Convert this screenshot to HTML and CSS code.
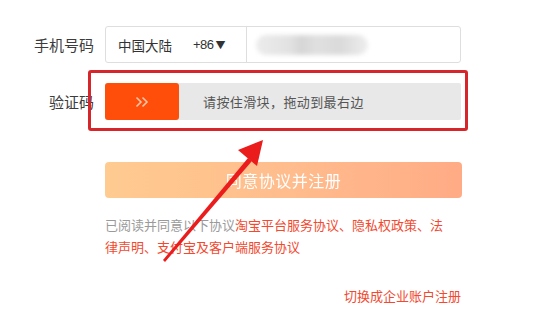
FILE: index.html
```html
<!DOCTYPE html>
<html lang="zh">
<head>
<meta charset="utf-8">
<link rel="stylesheet" href="styles.css">
</head>
<body>
<div class="page">
  <div class="row">
    <div class="label">手机号码</div>
    <div class="field phone">
      <div class="region">中国大陆<span class="code">+86</span><span class="caret">▼</span></div>
      <div class="number"><div class="blur"></div></div>
    </div>
  </div>
  <div class="row captcha-row">
    <div class="label">验证码</div>
    <div class="field slider">
      <div class="handle">
        <svg width="14" height="12" viewBox="0 0 14 12"><path d="M1.5 1.5 L6 6 L1.5 10.5 M7.5 1.5 L12 6 L7.5 10.5" fill="none" stroke="#ffc4a8" stroke-width="1.6"/></svg>
      </div>
      <div class="hint">请按住滑块，拖动到最右边</div>
    </div>
  </div>
  <div class="row btn-row">
    <div class="label"></div>
    <div class="submit">同意协议并注册</div>
  </div>
  <div class="row agree-row">
    <div class="label"></div>
    <p class="agree">已阅读并同意以下协议<span class="link">淘宝平台服务协议、隐私权政策、法律声明、支付宝及客户端服务协议</span></p>
  </div>
  <div class="switch"><span>切换成企业账户注册</span></div>

  <div class="highlight"></div>
  <svg class="arrow" width="543" height="317" viewBox="0 0 543 317">
    <path d="M163 260 L248 158 L252 161 L165 262 Z" fill="#ea1c1c"/>
    <path d="M263 140 L238 150 L257 166 Z" fill="#ea1c1c"/>
  </svg>
</div>
</body>
</html>
```
FILE: styles.css
```css
html, body {
  margin: 0;
  padding: 0;
  background: #fff;
}
.page {
  position: relative;
  width: 543px;
  height: 317px;
  padding-top: 26px;
  box-sizing: border-box;
  font-family: "Noto Sans CJK SC", "Noto Sans", sans-serif;
  color: #333;
  overflow: hidden;
}
.row {
  display: flex;
  align-items: center;
  gap: 11px;
}
.label {
  width: 94px;
  flex: none;
  text-align: right;
  font-size: 15px;
  color: #3c3c3c;
}
.field {
  width: 356px;
  height: 37px;
  box-sizing: border-box;
  flex: none;
}
.phone {
  display: flex;
  border: 1px solid #dedede;
  border-radius: 3px;
}
.region {
  width: 141px;
  box-sizing: border-box;
  border-right: 1px solid #dedede;
  display: flex;
  align-items: center;
  padding-left: 12px;
  font-size: 13.5px;
  color: #333;
}
.code {
  margin-left: 21px;
  font-family: "Liberation Sans", sans-serif;
  font-size: 13px;
  letter-spacing: -0.5px;
}
.caret {
  font-size: 10px;
  margin-left: 2px;
}
.number {
  flex: 1;
  display: flex;
  align-items: center;
  padding-left: 9px;
}
.blur {
  width: 112px;
  height: 20px;
  border-radius: 10px;
  background: linear-gradient(90deg, #ececec 0%, #e2e2e2 30%, #d6d6d6 40%, #e0e0e0 55%, #dadada 75%, #eeeeee 100%);
  filter: blur(2px);
}
.captcha-row {
  margin-top: 20px;
}
.slider {
  display: flex;
  align-items: center;
  background: #e8e8e8;
  border-radius: 2px;
}
.handle {
  width: 74px;
  height: 37px;
  background: #ff4e0a;
  border-radius: 3px;
  display: flex;
  align-items: center;
  justify-content: center;
}
.hint {
  margin-left: 24px;
  font-size: 13px;
  color: #555;
  letter-spacing: 0.4px;
}
.btn-row {
  margin-top: 42px;
}
.submit {
  width: 357px;
  height: 36px;
  border-radius: 4px;
  background: linear-gradient(90deg, #ffc98c 0%, #ffb886 55%, #ffa77f 100%);
  color: #fff;
  font-size: 16px;
  letter-spacing: 0.5px;
  display: flex;
  align-items: center;
  justify-content: center;
  opacity: 0.95;
}
.agree-row {
  margin-top: 16px;
  align-items: flex-start;
}
.agree {
  margin: 0;
  width: 348px;
  font-size: 13px;
  line-height: 22px;
  color: #9a9a9a;
}
.link {
  color: #f2492f;
}
.switch {
  margin-top: 28px;
  width: 461px;
  text-align: right;
  font-size: 13px;
  color: #f2492f;
}
.highlight {
  position: absolute;
  left: 88px;
  top: 70px;
  width: 380px;
  height: 61px;
  box-sizing: border-box;
  border: 3px solid #d7262b;
  border-radius: 3px;
}
.arrow {
  position: absolute;
  left: 0;
  top: 0;
}
```
